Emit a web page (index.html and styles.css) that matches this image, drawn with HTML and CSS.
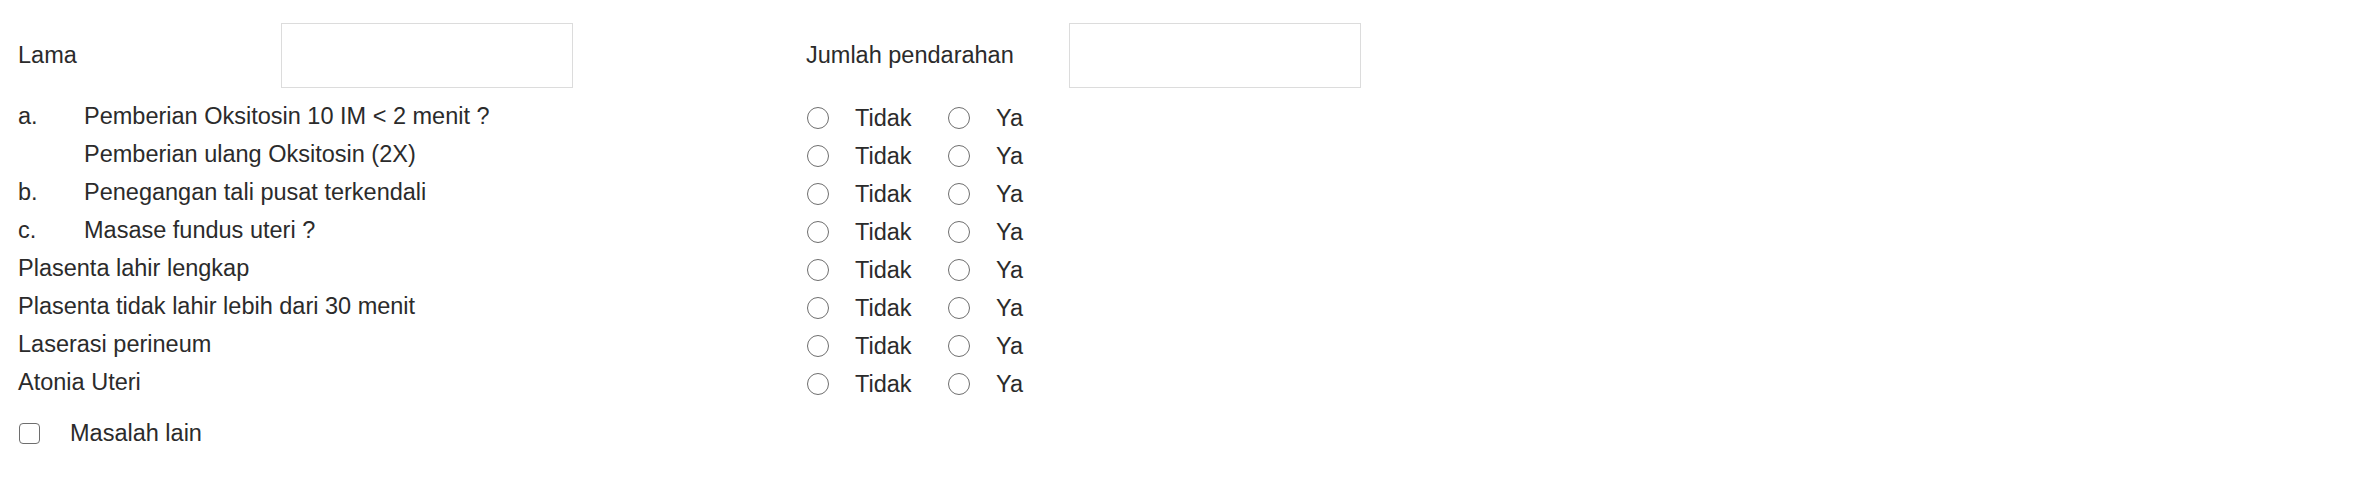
FILE: index.html
```html
<!DOCTYPE html>
<html lang="id">
<head>
<meta charset="utf-8">
<title>Kala III</title>
<link rel="stylesheet" href="styles.css">
</head>
<body>
<div class="form">
  <div class="head-row">
    <div class="field">
      <span class="field-label">Lama</span>
      <input class="text-input" type="text">
    </div>
    <div class="field">
      <span class="field-label">Jumlah pendarahan</span>
      <input class="text-input" type="text">
    </div>
  </div>

  <div class="q-list">
    <div class="q-row">
      <div class="q-label"><span class="q-letter">a.</span><span>Pemberian Oksitosin 10 IM &lt; 2 menit ?</span></div>
      <div class="q-options">
        <label class="opt"><input class="radio" type="radio" name="q1">Tidak</label>
        <label class="opt"><input class="radio" type="radio" name="q1">Ya</label>
      </div>
    </div>
    <div class="q-row">
      <div class="q-label"><span class="q-letter"></span><span>Pemberian ulang Oksitosin (2X)</span></div>
      <div class="q-options">
        <label class="opt"><input class="radio" type="radio" name="q2">Tidak</label>
        <label class="opt"><input class="radio" type="radio" name="q2">Ya</label>
      </div>
    </div>
    <div class="q-row">
      <div class="q-label"><span class="q-letter">b.</span><span>Penegangan tali pusat terkendali</span></div>
      <div class="q-options">
        <label class="opt"><input class="radio" type="radio" name="q3">Tidak</label>
        <label class="opt"><input class="radio" type="radio" name="q3">Ya</label>
      </div>
    </div>
    <div class="q-row">
      <div class="q-label"><span class="q-letter">c.</span><span>Masase fundus uteri ?</span></div>
      <div class="q-options">
        <label class="opt"><input class="radio" type="radio" name="q4">Tidak</label>
        <label class="opt"><input class="radio" type="radio" name="q4">Ya</label>
      </div>
    </div>
    <div class="q-row">
      <div class="q-label"><span>Plasenta lahir lengkap</span></div>
      <div class="q-options">
        <label class="opt"><input class="radio" type="radio" name="q5">Tidak</label>
        <label class="opt"><input class="radio" type="radio" name="q5">Ya</label>
      </div>
    </div>
    <div class="q-row">
      <div class="q-label"><span>Plasenta tidak lahir lebih dari 30 menit</span></div>
      <div class="q-options">
        <label class="opt"><input class="radio" type="radio" name="q6">Tidak</label>
        <label class="opt"><input class="radio" type="radio" name="q6">Ya</label>
      </div>
    </div>
    <div class="q-row">
      <div class="q-label"><span>Laserasi perineum</span></div>
      <div class="q-options">
        <label class="opt"><input class="radio" type="radio" name="q7">Tidak</label>
        <label class="opt"><input class="radio" type="radio" name="q7">Ya</label>
      </div>
    </div>
    <div class="q-row">
      <div class="q-label"><span>Atonia Uteri</span></div>
      <div class="q-options">
        <label class="opt"><input class="radio" type="radio" name="q8">Tidak</label>
        <label class="opt"><input class="radio" type="radio" name="q8">Ya</label>
      </div>
    </div>
  </div>

  <label class="check-row"><input class="checkbox" type="checkbox">Masalah lain</label>
</div>
</body>
</html>
```

FILE: styles.css
```css
html, body {
  margin: 0;
  padding: 0;
  background: #ffffff;
}

body {
  font-family: "Liberation Sans", Arial, Helvetica, sans-serif;
  font-size: 23.5px;
  color: #2b2b2b;
}

.form {
  padding: 23px 0 0 18px;
}

.head-row {
  display: grid;
  grid-template-columns: 788px auto;
}

.field {
  display: flex;
  align-items: center;
}

.field-label {
  width: 263px;
  flex: none;
}

.text-input {
  box-sizing: border-box;
  width: 292px;
  height: 65px;
  margin: 0;
  border: 1px solid #dcdcdc;
  border-radius: 0;
  background: #fff;
  font: inherit;
  outline: none;
}

.q-list {
  margin-top: 11px;
}

.q-row {
  display: grid;
  grid-template-columns: 788px auto;
  height: 38px;
  align-items: center;
}

.q-label {
  display: flex;
  align-items: center;
  white-space: nowrap;
  position: relative;
  top: -2px;
}

.q-letter {
  width: 66px;
  flex: none;
}

.q-options {
  display: flex;
  align-items: center;
}

.opt {
  display: flex;
  align-items: center;
  width: 141px;
  flex: none;
}

.radio {
  appearance: none;
  -webkit-appearance: none;
  box-sizing: border-box;
  width: 22px;
  height: 22px;
  margin: 0 26px 0 1px;
  border: 1.7px solid #6e6e6e;
  border-radius: 50%;
  background: #fff;
  flex: none;
}

.check-row {
  display: flex;
  align-items: center;
  margin-top: 17px;
}

.checkbox {
  appearance: none;
  -webkit-appearance: none;
  box-sizing: border-box;
  width: 21px;
  height: 21px;
  margin: 0 30px 0 1px;
  border: 1.7px solid #6e6e6e;
  border-radius: 4px;
  background: #fff;
  flex: none;
}
```
